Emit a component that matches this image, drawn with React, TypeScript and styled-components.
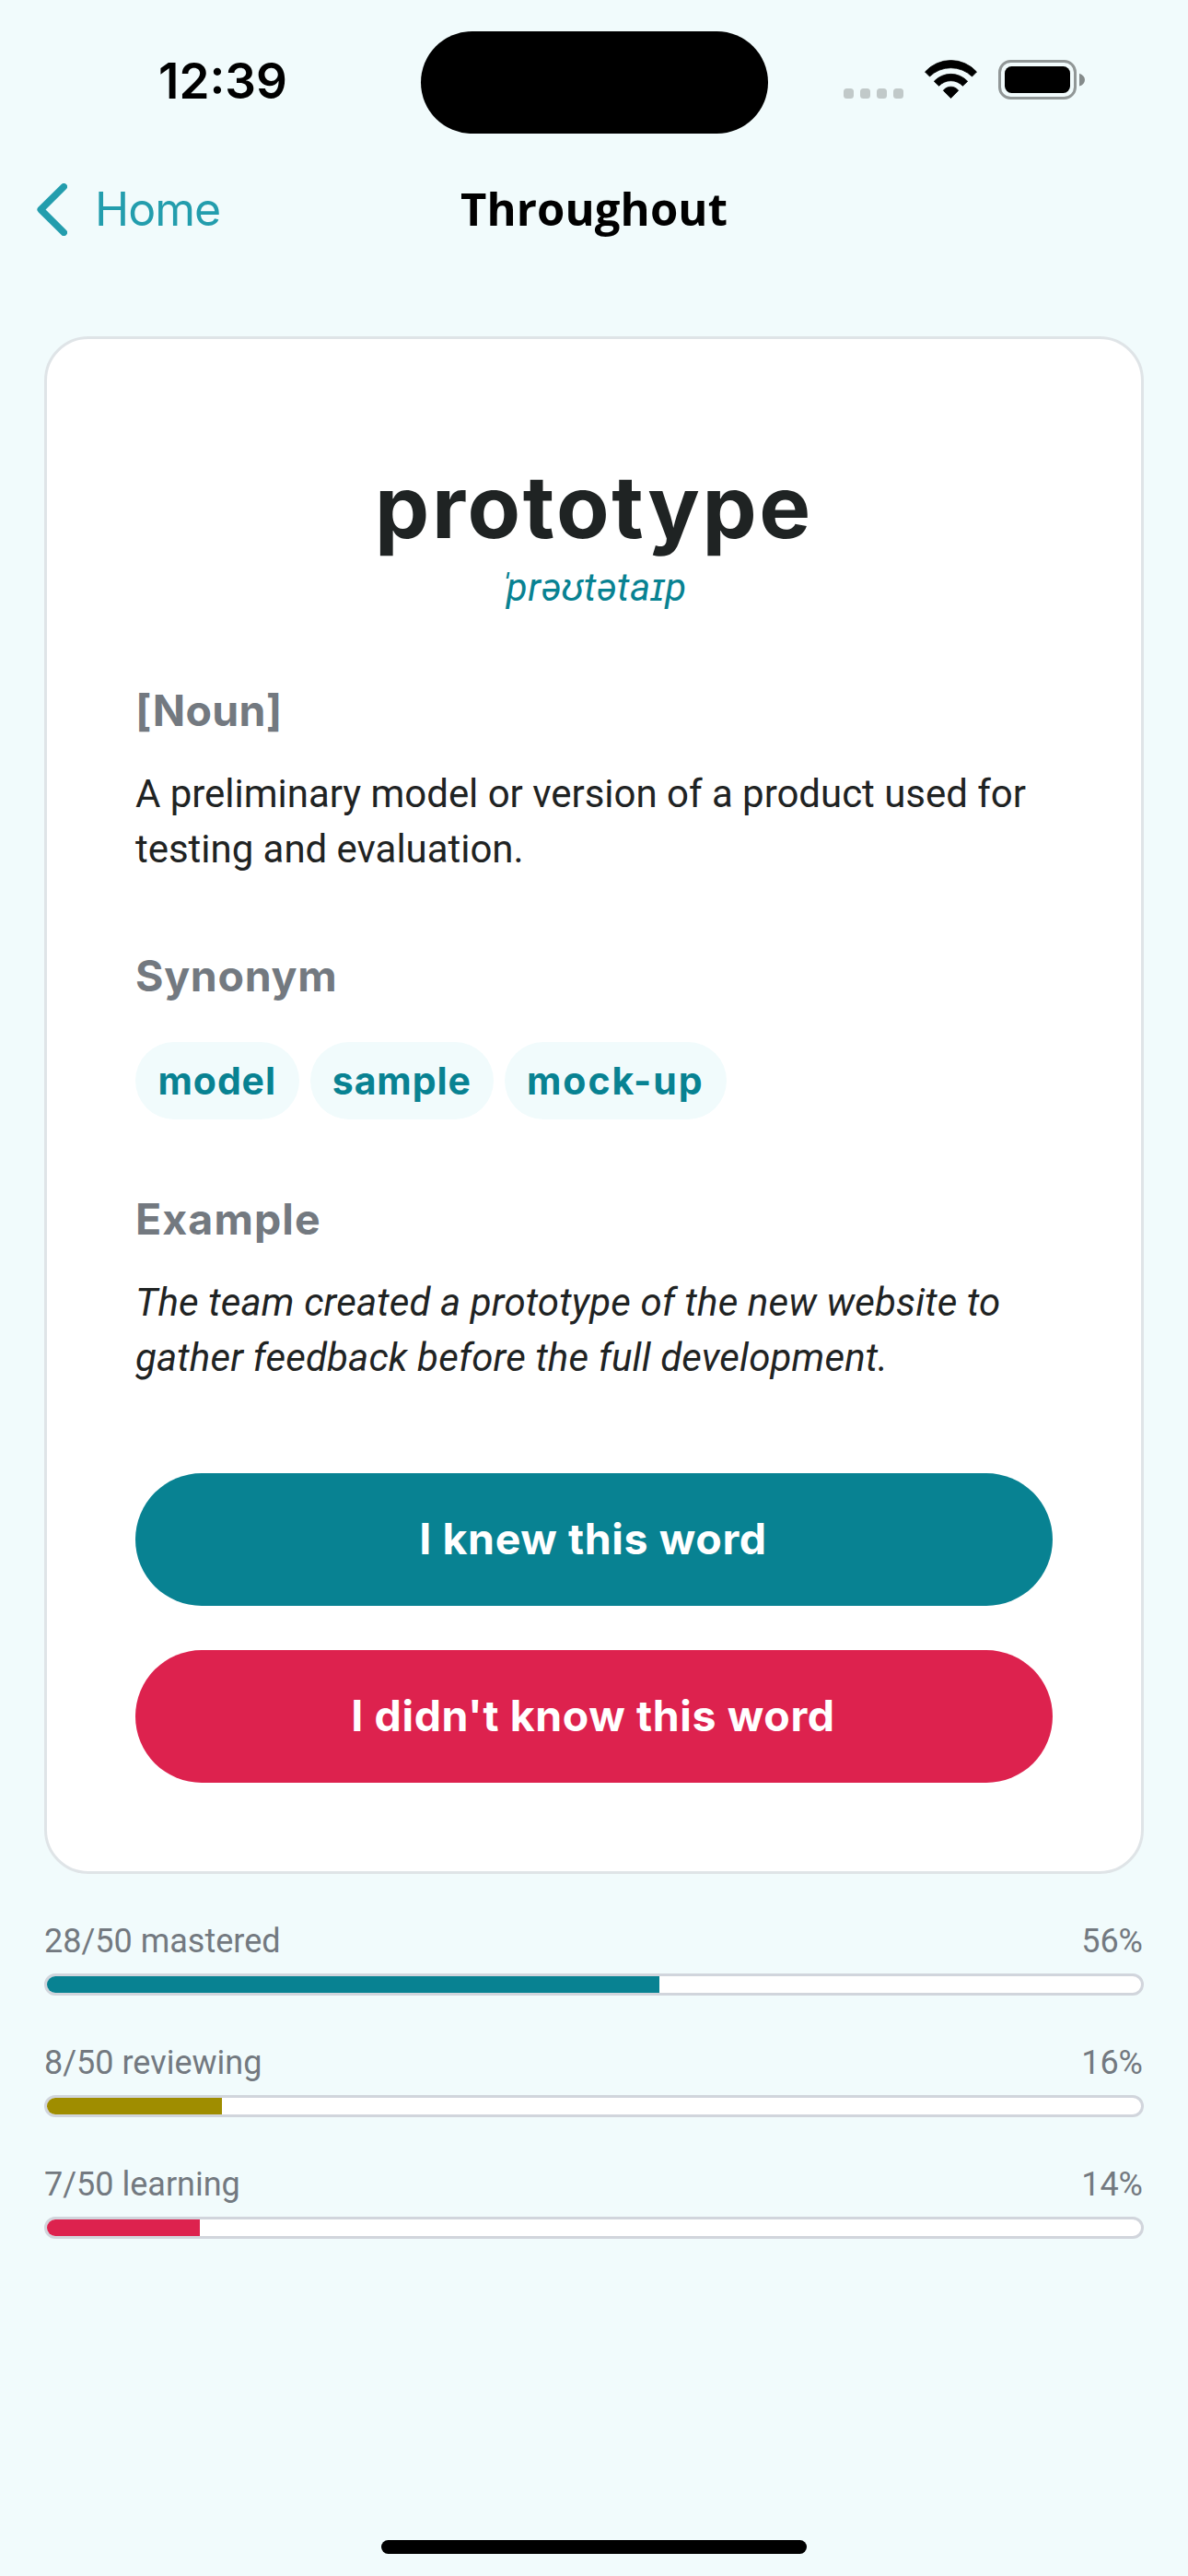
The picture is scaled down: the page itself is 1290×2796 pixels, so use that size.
import React from "react";
import styled, { createGlobalStyle } from "styled-components";

const color = {
  background: "#f1fbfc",
  surface: "#ffffff",
  ink: "#1f2323",
  muted: "#737980",
  teal: "#088292",
  link: "#239dad",
  red: "#dd224e",
  olive: "#9f8d00",
  cardBorder: "#dfe4e7",
  trackBorder: "#d1d5dc",
};

const display = `"Inter", "Liberation Sans", sans-serif`;
const body = `"Roboto", "Liberation Sans", sans-serif`;

const GlobalStyle = createGlobalStyle`
  *, *::before, *::after { box-sizing: border-box; }
  html, body { margin: 0; padding: 0; background: ${color.background}; }
  svg { display: block; }
`;

const Screen = styled.div`
  width: 1290px;
  height: 2796px;
  display: flex;
  flex-direction: column;
  overflow: hidden;
  background: ${color.background};
  font-family: ${body};
`;

const StatusBar = styled.div`
  height: 178px;
  flex: none;
  display: grid;
  grid-template-columns: 1fr 377px 1fr;
  align-items: center;
`;

const Clock = styled.time`
  padding-left: 172px;
  padding-bottom: 2px;
  font: 600 53px/60px ${display};
  color: #000;
`;

const Island = styled.div`
  height: 111px;
  border-radius: 56px;
  background: #000;
`;

const StatusIcons = styled.div`
  display: flex;
  align-items: flex-end;
  gap: 23px;
  padding: 0 0 5px 82px;
`;

const NavBar = styled.header`
  height: 98px;
  flex: none;
  display: grid;
  grid-template-columns: 1fr auto 1fr;
  align-items: center;
  padding: 0 40px;
`;

const BackLink = styled.a`
  display: flex;
  align-items: center;
  gap: 30px;
  font: 400 50px/60px ${display};
  letter-spacing: -1px;
  color: ${color.link};
`;

const NavTitle = styled.h1`
  margin: 0;
  padding-bottom: 2px;
  font: 700 49px/60px "Open Sans", sans-serif;
  letter-spacing: 0.1px;
  color: #000;
`;

const Content = styled.main`
  flex: 1;
  display: flex;
  flex-direction: column;
  gap: 48px;
  padding: 89px 48px 0;
`;

const Card = styled.article`
  padding: 123px 96px 96px;
  border: 3px solid ${color.cardBorder};
  border-radius: 48px;
  background: ${color.surface};
  display: flex;
  flex-direction: column;
`;

const Sections = styled.div`
  display: flex;
  flex-direction: column;
  gap: 77px;
`;

const WordHeader = styled.div`
  display: flex;
  flex-direction: column;
  align-items: center;
`;

const Word = styled.h2`
  margin: 0;
  font: 700 94px/118px ${display};
  letter-spacing: 2.6px;
  color: ${color.ink};
`;

const Phonetic = styled.p`
  margin: 0;
  padding: 3px 3px 0 0;
  font: italic 400 42px/52px ${body};
  letter-spacing: 0.6px;
  color: ${color.teal};
`;

const StressMark = styled.span`
  margin-right: -6px;
`;

const Section = styled.section`
  display: flex;
  flex-direction: column;
  gap: 31px;
`;

const SectionTitle = styled.h3<{ $tracking: number }>`
  margin: 0;
  font: 700 46.5px/60px ${display};
  letter-spacing: ${(p) => p.$tracking}px;
  color: ${color.muted};
`;

const Text = styled.p<{ $italic?: boolean }>`
  margin: 0;
  font: ${(p) => (p.$italic ? "italic" : "normal")} 400 42px/60px ${body};
  letter-spacing: ${(p) => (p.$italic ? 0.15 : -0.03)}px;
  color: ${color.ink};
`;

const Chips = styled.ul`
  display: flex;
  gap: 12px;
  margin: 11px 0 1px;
  padding: 0;
  list-style: none;
`;

const Chip = styled.li<{ $width: number; $tracking: number }>`
  width: ${(p) => p.$width}px;
  height: 84px;
  display: flex;
  align-items: center;
  justify-content: center;
  border-radius: 42px;
  background: ${color.background};
  font: 700 41px/60px ${display};
  letter-spacing: ${(p) => p.$tracking}px;
  color: ${color.teal};
`;

const Actions = styled.div`
  display: flex;
  flex-direction: column;
  gap: 48px;
  margin-top: 95px;
`;

const ActionButton = styled.button<{ $tone: string }>`
  height: 144px;
  padding: 0 2px 2px 0;
  border: 0;
  border-radius: 72px;
  background: ${(p) => p.$tone};
  color: #fff;
  font: 700 46.5px/60px ${display};
  letter-spacing: 0.6px;
`;

const ProgressItem = styled.div`
  display: flex;
  flex-direction: column;
  gap: 11px;
`;

const ProgressLabels = styled.div`
  display: flex;
  justify-content: space-between;
  padding: 1px 1px 0 0;
  font: 400 36px/48px ${body};
  color: ${color.muted};
`;

const Track = styled.div`
  height: 24px;
  border: 3px solid ${color.trackBorder};
  border-radius: 12px;
  background: ${color.surface};
  overflow: hidden;
`;

const Fill = styled.div<{ $tone: string }>`
  height: 100%;
  background: ${(p) => p.$tone};
`;

const HomeIndicator = styled.div`
  width: 462px;
  height: 15px;
  flex: none;
  align-self: center;
  margin-bottom: 24px;
  border-radius: 8px;
  background: #000;
`;

const SignalIcon = () => (
  <svg width="65" height="43" viewBox="0 0 65 43" fill="#c1c9c9">
    {[0, 18, 36, 54].map((x) => (
      <rect key={x} x={x} y="31" width="11" height="11" rx="3.5" />
    ))}
  </svg>
);

const WifiIcon = () => (
  <svg width="57" height="43" viewBox="0 0 57 43" fill="#000" stroke="#000" strokeWidth="0.8" strokeLinejoin="round">
    <path d="M0.5 13A37.7 37.7 0 0 1 56.5 13L51.5 18A33 33 0 0 0 5.5 18Z" />
    <path d="M10.3 23.3A24.8 24.8 0 0 1 46.7 23.3L41.4 28.3A17.6 17.6 0 0 0 15.6 28.3Z" />
    <path d="M20.3 33.3A10.2 10.2 0 0 1 36.7 33.3L28.5 41.6Z" />
  </svg>
);

const BatteryIcon = () => (
  <svg width="94" height="43" viewBox="0 0 94 43">
    <rect x="1.5" y="1.5" width="82" height="40" rx="12" fill="none" stroke="#919797" strokeWidth="3" />
    <rect x="7" y="7" width="71" height="29" rx="7.5" fill="#000" />
    <path d="M88 14.8C92 16 94 19 94 21.7C94 24.4 92 27.4 88 28.6Z" fill="#858b8b" />
  </svg>
);

const ChevronLeft = () => (
  <svg width="33" height="57" viewBox="0 0 33 57" fill="none" stroke={color.link} strokeWidth="7.4" strokeLinecap="round" strokeLinejoin="round">
    <path d="M29.3 3.7L4.2 28.5L29.3 53.3" />
  </svg>
);

const synonyms = [
  { label: "model", width: 177.5, tracking: 0.9 },
  { label: "sample", width: 199.5, tracking: 0.9 },
  { label: "mock-up", width: 240.5, tracking: 2 },
];

const progress = [
  { count: 28, status: "mastered", tone: color.teal },
  { count: 8, status: "reviewing", tone: color.olive },
  { count: 7, status: "learning", tone: color.red },
];
const total = 50;

export default function App() {
  return (
    <Screen>
      <GlobalStyle />
      <StatusBar>
        <Clock>12:39</Clock>
        <Island />
        <StatusIcons>
          <SignalIcon />
          <WifiIcon />
          <BatteryIcon />
        </StatusIcons>
      </StatusBar>
      <NavBar>
        <BackLink>
          <ChevronLeft />
          Home
        </BackLink>
        <NavTitle>Throughout</NavTitle>
      </NavBar>
      <Content>
        <Card>
          <Sections>
            <WordHeader>
              <Word>prototype</Word>
              <Phonetic>
                <StressMark>ˈ</StressMark>prəʊtətaɪp
              </Phonetic>
            </WordHeader>
            <Section>
              <SectionTitle $tracking={0.3}>[Noun]</SectionTitle>
              <Text>
                A preliminary model or version of a product used for
                <br />
                testing and evaluation.
              </Text>
            </Section>
            <Section>
              <SectionTitle $tracking={0.7}>Synonym</SectionTitle>
              <Chips>
                {synonyms.map((s) => (
                  <Chip key={s.label} $width={s.width} $tracking={s.tracking}>
                    {s.label}
                  </Chip>
                ))}
              </Chips>
            </Section>
            <Section>
              <SectionTitle $tracking={1.1}>Example</SectionTitle>
              <Text $italic>
                The team created a prototype of the new website to
                <br />
                gather feedback before the full development.
              </Text>
            </Section>
          </Sections>
          <Actions>
            <ActionButton $tone={color.teal}>I knew this word</ActionButton>
            <ActionButton $tone={color.red}>I didn't know this word</ActionButton>
          </Actions>
        </Card>
        {progress.map((p) => {
          const percent = `${Math.round((p.count / total) * 100)}%`;
          return (
            <ProgressItem key={p.status}>
              <ProgressLabels>
                <span>{`${p.count}/${total} ${p.status}`}</span>
                <span>{percent}</span>
              </ProgressLabels>
              <Track>
                <Fill $tone={p.tone} style={{ width: percent }} />
              </Track>
            </ProgressItem>
          );
        })}
      </Content>
      <HomeIndicator />
    </Screen>
  );
}
